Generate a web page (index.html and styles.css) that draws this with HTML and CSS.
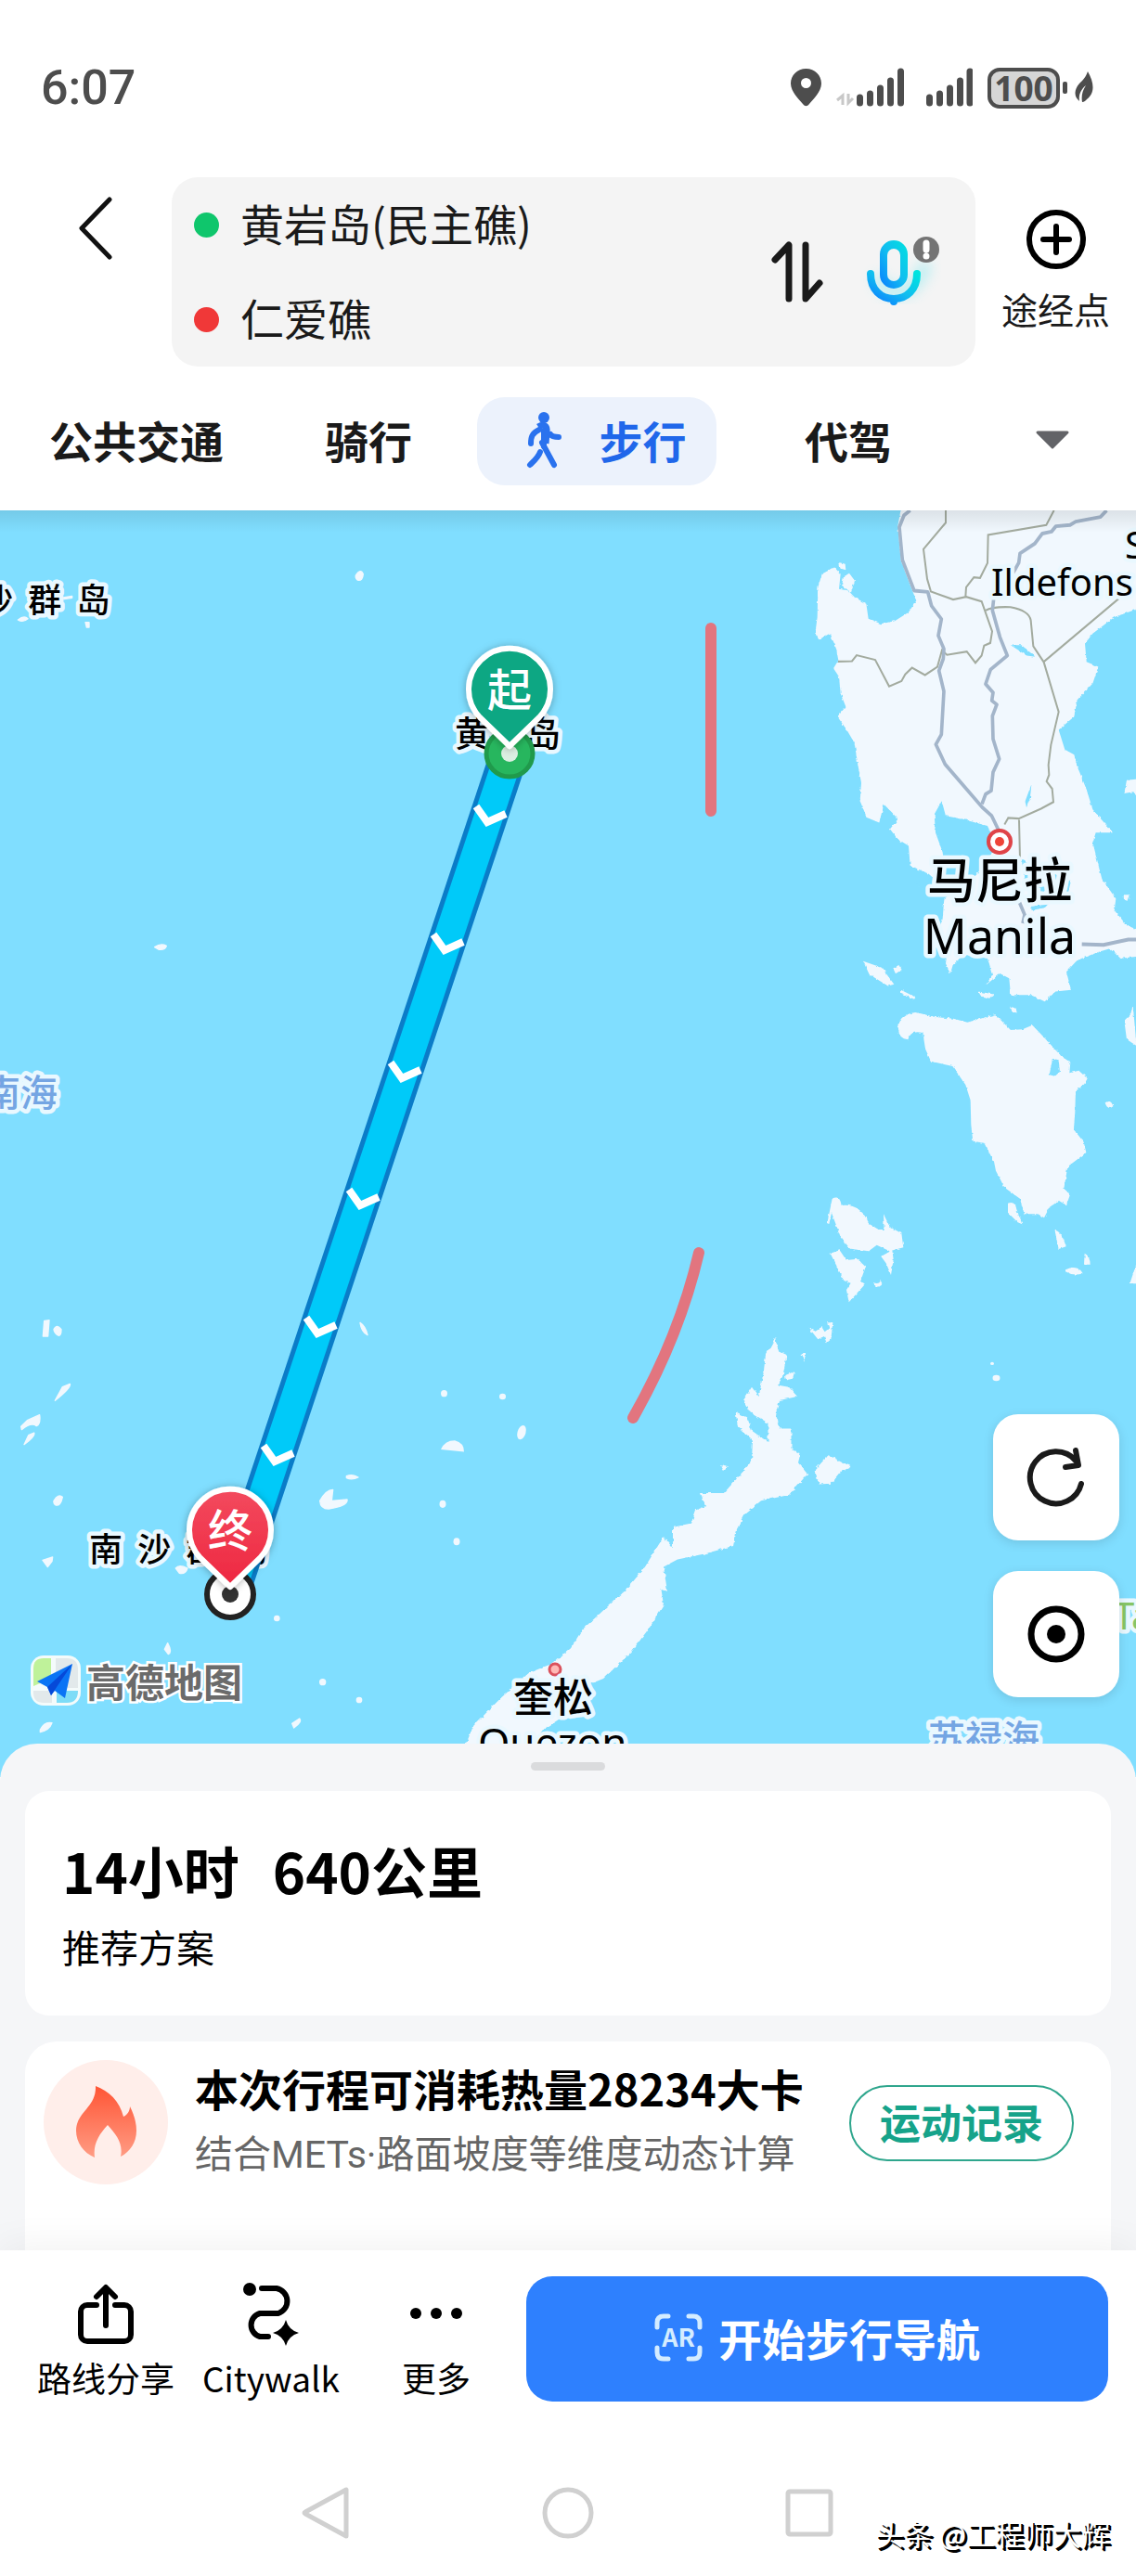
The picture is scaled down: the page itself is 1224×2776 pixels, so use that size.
FILE: index.html
```
<!DOCTYPE html>
<html lang="zh-CN">
<head>
<meta charset="utf-8">
<meta name="viewport" content="width=device-width, initial-scale=1">
	<title>步行导航</title>

	<link rel="stylesheet" href="styles.css">
</head>
<body>

<div class="status-bar">
	<span class="time">6:07</span>
	<div class="status-icons">
		<svg class="status-svg" width="200" height="44" viewBox="0 0 200 44">
			<path fill-rule="evenodd" d="M20.500 1C11 1 4 8 4 17c0 9 9 17 13 22 2.500 3 4.500 3 7 0 4-5 13-13 13-22C37 8 30 1 20.500 1zM20.500 11a5.500 5.500 0 1 1 0 11a5.500 5.500 0 1 1 0-11z"/>
			<path d="M54 35l6-5v10M66 28v10l5-5" class="data-arrows"/>
			<path d="M78.500 32v6M89.500 28v10M100.500 22v16M111.500 14v24M122.500 4v34M153.500 32v6M164.500 28v10M175.500 22v16M186.500 14v24M197 4v34" class="signal"/>
		</svg>
		<span class="battery">100</span>
		<svg class="status-svg" width="36" height="44" viewBox="0 0 36 44">
			<rect x="3" y="15" width="5" height="13" rx="2"/>
			<path d="M30 4c7 12 8 23-1 30-1 1-3 3-5 3-1-6 0-12 4-18-6 5-8 11-7 17-6-5-6-12 0-19 4-4 7-7 9-13z"/>
		</svg>
	</div>
</div>

<div class="search">
	<button class="back" aria-label="返回">
		<svg width="40" height="70" viewBox="0 0 40 70"><path d="M35 4L5 35l30 31"/></svg>
	</button>
	<div class="route-box">
		<div class="points">
			<label class="point"><span class="dot start"></span><input type="text" value="黄岩岛(民主礁)" aria-label="起点"></label>
			<label class="point"><span class="dot end"></span><input type="text" value="仁爱礁" aria-label="终点"></label>
		</div>
		<button class="swap" aria-label="交换起终点">
			<svg width="58" height="68" viewBox="0 0 58 68"><path d="M5 21L20 5v58M38 5v58l15-17"/></svg>
		</button>
		<button class="mic" aria-label="语音输入">
			<svg width="88" height="92" viewBox="0 0 88 92">
				<defs>
					<linearGradient id="micFill" x1="0" y1="1" x2="1" y2="0">
						<stop offset="0" stop-color="#0a7cff"/>
						<stop offset=".5" stop-color="#12bdf0"/>
						<stop offset="1" stop-color="#00e3df"/>
					</linearGradient>
					<filter id="glow" x="-40%" y="-40%" width="180%" height="180%"><feGaussianBlur stdDeviation="7"/></filter>
				</defs>
				<path d="M20 50c4 22 38 30 52-14" fill="none" stroke="#66e6ee" stroke-width="14" opacity=".4" filter="url(#glow)"/>
				<path fill="url(#micFill)" fill-rule="evenodd" d="M37 12a15 15 0 0 1 15 15v22a15 15 0 0 1-30 0v-22a15 15 0 0 1 15-15zm0 9a7 7 0 0 0-7 7v21a7 7 0 0 0 14 0v-21a7 7 0 0 0-7-7z"/>
				<path fill="none" stroke="url(#micFill)" stroke-width="8" stroke-linecap="round" d="M12 48c0 17 11 27 25 27s25-10 25-27M37 75v3"/>
				<circle cx="72" cy="22" r="14" fill="#747474"/>
				<path d="M72 15v7M72 29v.1" stroke="#fff" stroke-width="7" stroke-linecap="round"/>
			</svg>
		</button>
	</div>
	<button class="via">
		<svg width="64" height="64" viewBox="0 0 64 64"><circle cx="32" cy="32" r="29"/><path d="M32 18v28M18 32h28"/></svg>
		<span>途经点</span>
	</button>
</div>

<div class="tabs">
	<button class="tab">公共交通</button>
	<button class="tab">骑行</button>
	<button class="tab active">
		<svg width="40" height="62" viewBox="0 0 40 62">
			<circle cx="20" cy="7" r="6"/>
			<path d="M14 17c6-4 10-1 9 6l-1 12" class="walk-body"/>
			<path d="M15 20c-8 4-9 8-9 15M20 21v17M27 25c2 3 6 3 9 3" class="limb"/>
			<path d="M18 34l13 24M16 44c-2 6-7 10-11 14" class="limb"/>
		</svg>
		<span>步行</span>
	</button>
	<button class="tab">代驾</button>
	<button class="tab more-tabs" aria-label="更多方式">
		<svg width="40" height="24" viewBox="0 0 40 24"><path d="M4 4h32L20 20z"/></svg>
	</button>
</div>

<div class="map">
	<svg class="map-canvas" viewBox="0 550 1224 1365">
		<defs>
			<!-- ragged coastline -->
			<filter id="coast" x="-5%" y="-5%" width="110%" height="110%">
				<feTurbulence type="fractalNoise" baseFrequency=".09" numOctaves="2" seed="4"/>
				<feDisplacementMap in="SourceGraphic" scale="9" xChannelSelector="R" yChannelSelector="G"/>
			</filter>
			<linearGradient id="topShade" x1="0" y1="0" x2="0" y2="1">
				<stop offset="0" stop-color="#000" stop-opacity=".09"/>
				<stop offset="1" stop-color="#000" stop-opacity="0"/>
			</linearGradient>
			<linearGradient id="endFill" x1="0" y1="0" x2="0" y2="1">
				<stop offset="0" stop-color="#f34a5e"/>
				<stop offset="1" stop-color="#ee2740"/>
			</linearGradient>
			<filter id="pinShadow" x="-30%" y="-30%" width="160%" height="160%"><feDropShadow dx="0" dy="1" stdDeviation="4" flood-opacity=".3"/></filter>
			<path id="chevron" d="M-13-18L-1-1l20-9"/>
			<path id="pin" d="M-32 30a44 44 0 1 1 64 0L0 61z"/>
		</defs>
		<rect y="550" width="1224" height="1365" fill="#80deff"/>

		<!-- Luzon -->
		<g transform="translate(824 540) scale(.33333 .35714)" filter="url(#coast)">
			<path class="land" d="M445 0L430 75 440 180 475 265 490 300 465 335 420 362 375 370 335 355 328 310 290 290 270 270 240 265 245 220 225 200 185 220 172 260 170 350 163 400 175 418 210 400 230 440 238 480 222 505 240 530 245 580 262 620 235 650 265 690 290 730 300 790 312 850 308 905 330 955 370 970 385 915 412 940 430 960 405 990 430 1020 465 1040 470 1100 530 1125 560 1150 640 1160 580 1200 575 1260 550 1330 590 1360 585 1395 600 1425 608 1400 630 1380 650 1370 720 1380 735 1430 715 1460 760 1425 790 1440 795 1490 860 1490 905 1510 940 1480 990 1475 975 1420 1010 1385 1080 1360 1115 1350 1150 1380 1250 1370 1250 1310 1170 1280 1130 1235 1135 1200 1090 1140 1060 1030 1070 1000 1125 1000 1060 930 1040 870 1010 800 1000 765 970 750 950 690 1000 650 1010 600 1060 550 1078 500 1040 485 1035 430 1060 400 1130 350 1250 310V0z"/>
			<path class="land" d="M240 185l20 5 2 18-18-5zM255 228l18-10 18 22-12 36-30-22zM318 1388l60 20 40 50-20 5-60-35zM415 1410l18-10 10 14-20 12zM440 1475l48 22-5 6-44-18zM690 1480l50 8-10 12-28-2zM792 1525l20 5 3 14-14-4zM1160 1188l20 0-5 18-14-2zM1170 842l50-5v80l-28-40-30 5z"/>
			<path class="sea" d="M572 905L548 945 552 1000 575 1060 580 1100 560 1130 480 1150 560 1200 640 1165 700 1110 720 1080 750 1040 720 980 640 960 585 950zM795 435l35 0 45 35-28-4zM862 855l-4 40-12 30-4-20zM830 1080l30 20 60 10 40 30 30 5-10 40-40 0-60-10-40-30zM860 1222l55-5-10 10-42 8z"/>
		</g>
		<g transform="translate(824 540) scale(.33333 .35714)" fill="none">
			<path class="border" d="M585 28v37l-72 80 12 90 12 38 72 24 42-8 50 14 34 90-6 35-20 8-8 30-20 22-28-34-64 10-16-14-15 50-40 25-42-22-22 20-12 20-40 16-45-80-60-14-15 18-45 1"/>
			<path class="border" d="M935 28l-25 44-188 30-2 85-24 45-20-2-25 30-2 28M714 330q20-12 80-10 60 10 66 40l8 78 34 48 48 150-25 100-8 60 2 30-8 20 18 22 4 40-40 20-72 30-34-2-12 20M902 485l244-192M822 962l3 118"/>
			<path class="road" d="M470 28l-20 15-15 35 10 100 38 92 44 4 12 42 32 40-10 50 18 40-2 30-14 36 16 62-8 130-18 30 30 60 120 130 30 25 25 48"/>
			<path class="road" d="M1105 28l-20 20-80 14-18 10-46 4-14 16-30 6-24 30-48 30-4 28-18 30M740 295l-4 35 24 80 24 56-54 42-16 44 24 26-4 24 16 12-14 34 2 70 20 60-20 40-6 56-18 10-12 30M822 1208l18 40-6 26M1025 1337l70 2 80-16h30"/>
		</g>

		<!-- Mindoro and Calamian islands -->
		<g transform="translate(824 1060) scale(.33333)" filter="url(#coast)">
			<path class="land" d="M430 135q10-38 60-42l60 15 60 5 45 12 90-25 50 50 38-2 32-14 40 42 55 60 28 18-3 35 30-8 28 26-10 18-28 22-2 65-4 60 32 40 8 34-28 22-32 24-12 70 20 20-12 34-24-14-30 20-18 35-20-12-44 0-14-50-50-36-28-54-6-30-32-60-36-6-6-52-2-80-16-50-42-60-70-16-18-40-8-52q-40-10-48 22-30-5-30-28z"/>
			<path class="sea" d="M930 242l20 5 4 38-16 14-18-4 6-30z"/>
			<path class="land" d="M786 710q24-8 28 20l18 48-14-6-32-32zM938 798q20 0 36 52l-24 8-8-38zM1034 872q18 10 18 36h-20zM972 925q40-18 56 12-30 10-56-6zM1100 385q20-12 26 12-18 14-26-12zM1190 70l10 110 30 40-60-40-8-60 20-20zM1180 970l20-60h30v60z"/>
			<path class="land" d="M218 695q25-12 30 22 60-8 90 60l30 18 18 0-2-50 20 42 38 20 6 46-44 12-42-20-26 20-60-8-30-36-30-80-8 36-6-2zM212 872l30-10 22 32 36-4 26 26-16 44 14 12-52 58-8-40 14-22-22-8zM376 882l36-20 4 30-8 50-16-38zM350 966q20 8 24-6 14 18-14 20zM142 1112l22 12 20-14 10 16 14-12-6-18 18 0-6 54-14 12-8-22-20 10z"/>
		</g>

		<!-- Palawan -->
		<g transform="translate(440 1260) scale(.5 .40816)" filter="url(#coast)">
			<path class="land" d="M790 445L798 480 815 490 808 540 798 570 820 575 838 600 800 610 790 650 800 685 825 685 825 740 845 750 840 775 860 805 820 860 760 875 725 910 708 950 700 995 640 1015 580 1030 550 1050 558 1115 545 1110 550 1150 520 1210 480 1275 420 1345 390 1360 340 1440 290 1480 240 1560 110 1560 140 1470 200 1395 260 1330 310 1305 350 1265 375 1215 420 1165 470 1110 510 1050 550 970 570 1000 570 945 610 935 620 900 640 890 630 855 680 855 720 800 740 770 742 715 710 680 705 640 730 655 740 690 775 720 775 670 735 640 722 610 740 575 755 600 765 540 770 490z"/>
			<path class="land" d="M905 755L955 785 930 800 910 830 885 832 875 795zM812 545l20-10-4 18-14 4zM845 490l12-4-4 20zM672 780l18 4-10 12z"/>
		</g>
		<g transform="translate(440 1260) scale(.5 .40816)" class="land">
			<ellipse cx="77" cy="592" rx="7" ry="9"/><ellipse cx="203" cy="600" rx="7" ry="8"/><ellipse cx="244" cy="695" rx="9" ry="19" transform="rotate(12 244 695)"/>
			<path d="M70 740q8-24 30-24 20 6 20 30z"/>
			<ellipse cx="74" cy="884" rx="7" ry="10"/><ellipse cx="104" cy="983" rx="7" ry="10"/><circle cx="1258" cy="513" r="4"/><circle cx="1267" cy="551" r="8"/>
		</g>

		<!-- reefs -->
		<g transform="translate(0 1380) scale(.33333)" class="land reefs">
			<path d="M143 130l16-2-4 52-16 0zM174 158q10-20 24 0 0 20-8 20-14-6-16-20zM178 388l24-44 24-10q6 12-48 54zM68 472l20-20 40-18q4 30-10 36-16-14-48 12zM78 530l14-30 18-8q6 12-32 38zM174 712q14-24 28-12-6 30-22 26-8-4-6-14zM138 904l32-10-2 14-14 18zM568 930q10-14 38 0-6 20-26 16zM1164 136q18 12 24 40-20-10-24-40zM1120 632q20-8 38 4-20 10-38 2zM1034 712q20-36 42-36l-4 36 50-4q4 20-60 30-26 0-28-26zM532 1192l10-20q16 30 2 36zM130 1452q14-28 38-22-8 24-38 30zM944 1432l24-16q10 10-18 30z"/>
			<circle cx="895" cy="1092" r="8"/><circle cx="1043" cy="1298" r="9"/><circle cx="1161" cy="1356" r="8"/>
			<path d="M58-2136q20-16 32-4-16 14-32 4zM1150-2280q16-24 24-4-2 22-16 20-10-4-8-16zM500-1078q20-14 38-4-4 14-24 12zM205-2208l28-5v6l-26 4zM276-2128h12v16h-8z"/>
		</g>

		<path class="boundary" d="M766 677v197"/>
		<path class="boundary" d="M753 1350Q732 1440 682 1528"/>

		<circle cx="1077" cy="907" r="12" fill="#fff" stroke="#df4448" stroke-width="4"/>
		<circle cx="1077" cy="907" r="5" fill="#ef4438"/>
		<circle cx="598" cy="1799" r="6" fill="#ffb9b5" stroke="#da525c" stroke-width="3"/>

		<g class="label">
			<text x="-22" y="660" font-size="36">沙&#160;&#160;群&#160;&#160;岛</text>
			<text x="490" y="804" font-size="38">黄岩岛</text>
			<text x="96" y="1683" font-size="36">南&#160;&#160;沙&#160;&#160;群&#160;&#160;岛</text>
			<text x="1077" y="968" font-size="52" text-anchor="middle">马尼拉</text>
			<text x="1077" y="1028" font-size="52" text-anchor="middle" class="latin">Manila</text>
			<text x="1212" y="602" font-size="40" class="latin">S</text>
			<text x="1068" y="642" font-size="40" class="latin">Ildefons</text>
			<text x="553" y="1845" font-size="43">奎松</text>
			<text x="515" y="1894" font-size="44" class="latin">Quezon</text>
			<text x="-18" y="1192" font-size="40" class="water">南海</text>
			<text x="1000" y="1888" font-size="40" class="water">苏禄海</text>
			<text x="1200" y="1756" font-size="40" class="park latin">Ta</text>
		</g>

		<path class="route-edge" d="M549 812L248 1718"/>
		<path class="route" d="M549 812L248 1718"/>
		<g class="chevrons">
			<use href="#chevron" x="526" y="887"/><use href="#chevron" x="480" y="1025"/><use href="#chevron" x="434" y="1163"/>
			<use href="#chevron" x="389" y="1300"/><use href="#chevron" x="343" y="1438"/><use href="#chevron" x="297" y="1576"/>
		</g>

		<circle cx="549" cy="812" r="25" fill="#27b65e" stroke="#209a4b" stroke-width="5"/>
		<circle cx="549" cy="812" r="9" fill="#dcefe2"/>
		<use href="#pin" x="549" y="743" class="pin start-pin" filter="url(#pinShadow)"/>
		<text x="549" y="761" class="pin-text">起</text>

		<circle cx="248" cy="1718" r="25" fill="#fff" stroke="#222" stroke-width="6"/>
		<circle cx="248" cy="1718" r="9" fill="#333"/>
		<use href="#pin" x="248" y="1649" class="pin end-pin" filter="url(#pinShadow)"/>
		<text x="248" y="1667" class="pin-text">终</text>

		<rect y="550" width="1224" height="24" fill="url(#topShade)"/>
	</svg>

	<div class="logo">
		<svg width="54" height="54" viewBox="0 0 54 54">
			<rect width="54" height="54" rx="14" fill="#f4fbfb"/>
			<path d="M3 33V14Q3 3 14 3h8v22z" fill="#bff29a"/>
			<path d="M27 3h12q12 0 12 12v20H40L27 20z" fill="#e2e9eb"/>
			<path d="M3 38h20v13h-9Q3 51 3 40z" fill="#e2e9eb"/>
			<path d="M28 38h23q0 13-12 13H28z" fill="#7ddcf7"/>
			<path d="M45 9L7 28l11 6 4 9 4-5 11 8z" fill="#0a74f5"/>
			<path d="M45 9L18 34l4 9z" fill="#0649d8"/>
		</svg>
		<span>高德地图</span>
	</div>

	<div class="map-controls">
		<button aria-label="刷新">
			<svg width="66" height="66" viewBox="0 0 66 66"><path d="M60 40A28 28 0 1 1 54 15M54 4l3 16-14 2" fill="none" stroke="#1a1a1a" stroke-width="6" stroke-linecap="round" stroke-linejoin="round"/></svg>
		</button>
		<button aria-label="定位">
			<svg width="66" height="66" viewBox="0 0 66 66"><circle cx="33" cy="33" r="27" fill="none" stroke="#000" stroke-width="7"/><circle cx="33" cy="33" r="10"/></svg>
		</button>
	</div>
</div>

<div class="sheet">
	<div class="handle"></div>
	<div class="card plan">
		<h2><span>14小时</span><span>640公里</span></h2>
		<p>推荐方案</p>
	</div>
	<div class="card calorie">
		<svg class="flame" width="135" height="135" viewBox="0 0 135 135">
			<defs>
				<linearGradient id="flameFill" x1="0" y1="0" x2="0" y2="1">
					<stop offset="0" stop-color="#ff5535"/>
					<stop offset="1" stop-color="#ff9c84"/>
				</linearGradient>
			</defs>
			<circle cx="67" cy="67" r="67" fill="#ffeeea"/>
			<path fill="url(#flameFill)" d="M56 28c14 5 26 16 30 33 4-2 7-6 7-11 4 8 7 17 7 26 0 13-7 23-17 28 3-14-5-24-14-34-9 10-16 20-14 35-12-5-20-16-20-29 0-20 22-25 21-48z"/>
		</svg>
		<div class="calorie-text">
			<h3>本次行程可消耗热量28234大卡</h3>
			<p>结合METs·路面坡度等维度动态计算</p>
		</div>
		<button class="record">运动记录</button>
	</div>
</div>

<div class="bottom-bar">
	<button class="action">
		<svg width="66" height="66" viewBox="0 0 66 66"><path d="M23 24H13a7 7 0 0 0-7 7v25a7 7 0 0 0 7 7h40a7 7 0 0 0 7-7V31a7 7 0 0 0-7-7H43M33 46V6M23 15L33 5l10 10"/></svg>
		<span>路线分享</span>
	</button>
	<button class="action">
		<svg width="66" height="66" viewBox="0 0 66 66">
			<path d="M23 6h16a14 14 0 0 1 2 27H21a13 13 0 0 0 0 25h9"/>
			<circle cx="10" cy="7" r="7" class="solid"/>
			<path d="M49 40q3 11 14 14-11 3-14 14-3-11-14-14 11-3 14-14z" class="solid"/>
		</svg>
		<span>Citywalk</span>
	</button>
	<button class="action">
		<svg width="66" height="66" viewBox="0 0 66 66"><g class="solid"><circle cx="11" cy="33" r="6"/><circle cx="33" cy="33" r="6"/><circle cx="55" cy="33" r="6"/></g></svg>
		<span>更多</span>
	</button>
	<button class="go">
		<svg width="52" height="52" viewBox="0 0 52 52">
			<path d="M3 15V10q0-7 7-7h5M37 3h5q7 0 7 7v5M49 37v5q0 7-7 7h-5M15 49h-5q-7 0-7-7v-5"/>
			<text x="26" y="36" text-anchor="middle">AR</text>
		</svg>
		<span>开始步行导航</span>
	</button>
</div>

<div class="system-nav">
	<button aria-label="后退"><svg width="60" height="60" viewBox="0 0 60 60"><path d="M51 5v50L7 31q-2-1 0-2z"/></svg></button>
	<button aria-label="主页"><svg width="60" height="60" viewBox="0 0 60 60"><circle cx="30" cy="30" r="25"/></svg></button>
	<button aria-label="最近任务"><svg width="60" height="60" viewBox="0 0 60 60"><rect x="7" y="7" width="46" height="46" rx="2"/></svg></button>
	<span class="watermark">头条 @工程师大辉</span>
</div>

</body>
</html>
```
FILE: styles.css
```
*{
	box-sizing: border-box;
}
body{
	margin: 0;
	background: #fff;
	color: #000;
	font-family: "Noto Sans CJK SC", sans-serif;
}
h2, h3, p{
	margin: 0;
}
svg{
	display: block;
}
button{
	border: 0;
	padding: 0;
	background: none;
	color: inherit;
	font-family: inherit;
	cursor: pointer;
}

/* status bar */
.status-bar{
	display: flex;
	align-items: center;
	justify-content: space-between;
	height: 191px;
	padding: 0 46px 2px 44px;
	color: #4d4d4d;
}
.time{
	font: 500 52px Roboto, sans-serif;
}
.status-icons{
	display: flex;
	align-items: center;
}
.status-svg{
	fill: #4d4d4d;
}
.signal{
	fill: none;
	stroke: #4d4d4d;
	stroke-width: 7;
	stroke-linecap: round;
}
.status-svg .data-arrows{
	fill: none;
	stroke: #c8c8c8;
	stroke-width: 3;
}
.battery{
	width: 78px;
	height: 44px;
	margin-left: 16px;
	border: 4px solid #4d4d4d;
	border-radius: 13px;
	background: #d6d6d6;
	font: bold 37px/36px "Noto Sans", sans-serif;
	text-align: center;
}

/* search */
.search{
	display: flex;
}
.back{
	width: 185px;
	padding: 0 0 94px 83px;
}
.back svg, .swap svg, .via svg{
	fill: none;
	stroke: #111;
	stroke-width: 5;
	stroke-linecap: round;
	stroke-linejoin: round;
}
.route-box{
	flex: 1;
	display: flex;
	align-items: center;
	min-width: 0;
	padding: 0 37px 0 24px;
	border-radius: 28px;
	background: #f4f4f4;
}
.points{
	flex: 1;
	min-width: 0;
}
.point{
	display: flex;
	align-items: center;
	height: 102px;
}
.dot{
	flex: none;
	width: 27px;
	height: 27px;
	margin-right: 23px;
	border-radius: 50%;
}
.dot.start{
	background: #0fc66c;
}
.dot.end{
	background: #f03838;
}
.point input{
	flex: 1;
	min-width: 0;
	border: 0;
	padding: 0 0 4px;
	background: none;
	color: #1a1a1a;
	font: 47px/70px "Noto Sans CJK SC", sans-serif;
}
.swap{
	margin-right: 38px;
}
.swap svg{
	stroke: #1a1a1a;
	stroke-width: 7;
}
.via{
	width: 173px;
	font-size: 39px;
	line-height: 56px;
	color: #1a1a1a;
}
.via svg{
	margin: 0 auto 14px;
	stroke: #000;
	stroke-width: 6;
}

/* tabs */
.tabs{
	display: grid;
	grid-template-columns: 294fr 206fr 285fr 258fr 181fr;
	justify-items: center;
	padding: 33px 0 27px;
}
.tab{
	height: 95px;
	display: flex;
	align-items: center;
	padding-bottom: 4px;
	color: #1a1a1a;
	font-size: 47px;
	font-weight: bold;
}
.tab.active{
	gap: 40px;
	padding: 0 32px 4px 52px;
	border-radius: 30px;
	background: #ecf2fc;
	color: #2067ea;
}
.tab.active svg{
	fill: #2a72ee;
}
.tab .walk-body{
	fill: none;
	stroke: #2a72ee;
	stroke-width: 7;
}
.tab .limb{
	fill: none;
	stroke: #2a72ee;
	stroke-width: 6;
	stroke-linecap: round;
}
.more-tabs svg{
	fill: #626367;
	stroke: #626367;
	stroke-width: 3;
	stroke-linejoin: round;
}

/* map */
.map{
	position: relative;
}
.map-canvas{
	width: 100%;
	height: auto;
}
.land{
	fill: #f1f8fe;
}
.reefs{
	stroke: #f1f8fe;
	stroke-width: 4;
	stroke-linejoin: round;
}
.sea{
	fill: #80deff;
}
.border{
	stroke: #a3ab9f;
	stroke-width: 6;
}
.road{
	stroke: #a3b5ca;
	stroke-width: 11;
	stroke-linejoin: round;
}
.boundary{
	fill: none;
	stroke: #e2757f;
	stroke-width: 12;
	stroke-linecap: round;
}
.label text{
	font-family: "Noto Sans CJK SC", sans-serif;
	font-weight: 500;
	fill: #000;
	stroke: #e9f8ff;
	stroke-width: 9;
	stroke-linejoin: round;
	paint-order: stroke;
}
.label .latin{
	font-family: "Noto Sans", sans-serif;
	font-weight: 400;
}
.label .water{
	fill: #74a5e3;
}
.label .park{
	fill: #86c566;
}
.route-edge{
	stroke: #0a7cc8;
	stroke-width: 41;
}
.route{
	stroke: #00caf9;
	stroke-width: 31;
}
.chevrons{
	fill: none;
	stroke: #fff;
	stroke-width: 8;
}
.pin{
	stroke: #fff;
	stroke-width: 6;
	stroke-linejoin: round;
}
.start-pin{
	fill: #0aa783;
}
.end-pin{
	fill: url(#endFill);
}
.pin-text{
	font: 500 48px "Noto Sans CJK SC", sans-serif;
	fill: #fff;
	text-anchor: middle;
}
.logo{
	position: absolute;
	left: 33px;
	bottom: 77px;
	display: flex;
	align-items: center;
	gap: 6px;
	color: #6b6b6b;
	font-size: 42px;
	font-weight: bold;
	line-height: 54px;
}
.logo span{
	-webkit-text-stroke: 5px #fff;
	paint-order: stroke;
}
.map-controls{
	position: absolute;
	right: 18px;
	bottom: 86px;
	display: flex;
	flex-direction: column;
	gap: 33px;
}
.map-controls button{
	display: flex;
	align-items: center;
	justify-content: center;
	width: 136px;
	height: 136px;
	border-radius: 27px;
	background: #fff;
	box-shadow: 0 3px 12px rgba(0,0,0,.12);
}

/* bottom sheet */
.sheet{
	position: relative;
	margin-top: -36px;
	padding: 20px 27px 0;
	border-radius: 40px 40px 0 0;
	background: #f5f6f8;
}
.handle{
	width: 80px;
	height: 9px;
	margin: 0 auto 22px;
	border-radius: 5px;
	background: #dadbdd;
}
.card{
	border-radius: 26px;
	background: #fff;
}
.plan{
	padding: 45px 40px;
}
.plan h2{
	display: flex;
	gap: 36px;
	font-size: 60px;
	line-height: 80px;
}
.plan p{
	margin-top: 12px;
	font-size: 41px;
	line-height: 60px;
}
.calorie{
	display: flex;
	align-items: center;
	margin-top: 28px;
	padding: 20px 40px 70px 20px;
	border-radius: 34px 34px 0 0;
}
.flame{
	flex: none;
	margin-right: 28px;
}
.calorie-text{
	flex: 1;
	margin: -8px 0 -4px;
}
.calorie h3{
	font-size: 47px;
	line-height: 72px;
	white-space: nowrap;
}
.calorie p{
	color: #666;
	font-family: Roboto, "Noto Sans CJK SC", sans-serif;
	font-size: 41px;
	line-height: 72px;
	white-space: nowrap;
}
.record{
	width: 242px;
	height: 82px;
	padding-bottom: 4px;
	border: 2px solid #2fa68d;
	border-radius: 41px;
	color: #16a38a;
	font-size: 44px;
	font-weight: bold;
	line-height: 60px;
}

/* bottom bar */
.bottom-bar{
	position: relative;
	display: flex;
	padding: 28px 30px 0 25px;
	background: #fff;
	box-shadow: 0 -4px 40px rgba(0,0,0,.06);
}
.action{
	width: 178px;
	padding-top: 6px;
	font-size: 37px;
	line-height: 52px;
}
.action svg{
	margin: 0 auto 10px;
	overflow: visible;
	fill: none;
	stroke: #000;
	stroke-width: 6;
	stroke-linecap: round;
	stroke-linejoin: round;
}
.action .solid{
	fill: #000;
	stroke: none;
}
.go{
	flex: 1;
	display: flex;
	align-items: center;
	justify-content: center;
	gap: 17px;
	height: 135px;
	margin-left: 8px;
	padding-bottom: 4px;
	border-radius: 28px;
	background: #2e80fe;
	color: #fff;
	font-size: 47px;
	font-weight: bold;
}
.go path{
	fill: none;
	stroke: #d4ecff;
	stroke-width: 5;
	stroke-linecap: round;
}
.go text{
	fill: #d4ecff;
	font: bold 27px "Noto Sans CJK SC", sans-serif;
}

/* system navigation */
.system-nav{
	position: relative;
	display: flex;
	justify-content: center;
	gap: 200px;
	height: 188px;
	padding-top: 52px;
	background: #fff;
}
.system-nav svg{
	fill: none;
	stroke: #d0d0d0;
	stroke-width: 5;
	stroke-linejoin: round;
}
.watermark{
	position: absolute;
	right: 28px;
	bottom: 21px;
	color: #fff;
	font-size: 31px;
	line-height: 50px;
	text-shadow: 2px 2px 0 #000, 3px 3px 0 #000;
}
```
